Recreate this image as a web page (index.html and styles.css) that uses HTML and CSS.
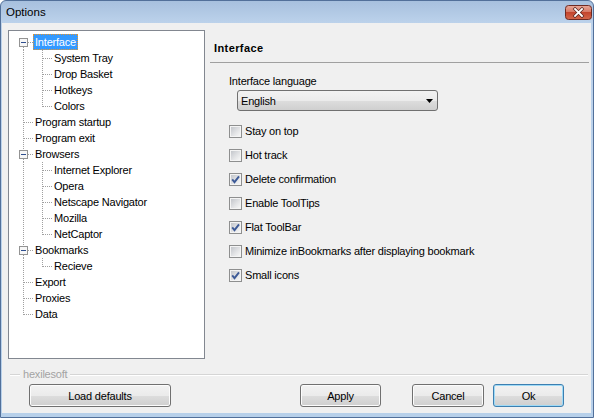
FILE: index.html
```html
<!DOCTYPE html>
<html>
<head>
<meta charset="utf-8">
<title>Options</title>
<link rel="stylesheet" href="styles.css">
</head>
<body>
<div class="window">
  <div class="titlebar">
    <span class="title">Options</span>
    <svg class="close" width="27" height="15" viewBox="0 0 27 15">
      <defs>
        <linearGradient id="cr" x1="0" y1="0" x2="0" y2="1">
          <stop offset="0" stop-color="#e9a99b"/>
          <stop offset="0.45" stop-color="#d77a66"/>
          <stop offset="0.5" stop-color="#c4452d"/>
          <stop offset="1" stop-color="#d5684c"/>
        </linearGradient>
      </defs>
      <rect x="0.5" y="0.5" width="26" height="14" rx="3" fill="url(#cr)" stroke="#6e2a22"/>
      <path d="M10 4 L17 11 M17 4 L10 11" stroke="#5a2620" stroke-width="3.2" stroke-linecap="square"/>
      <path d="M10 4 L17 11 M17 4 L10 11" stroke="#ffffff" stroke-width="1.8" stroke-linecap="square"/>
    </svg>
  </div>
  <div class="client">
    <div class="main">
      <div class="tree">
        <div class="node"><svg class="gut" width="24" height="16"><line class="dot" x1="14.5" y1="13" x2="14.5" y2="16"/><line class="dot" x1="19" y1="8.5" x2="24" y2="8.5"/><rect class="exp" x="10.5" y="4.5" width="8" height="8"/><line class="minus" x1="12" y1="8.5" x2="17" y2="8.5"/></svg><span class="lbl sel">Interface</span></div>
        <div class="node"><svg class="gut" width="43" height="16"><line class="dot" x1="14.5" y1="0" x2="14.5" y2="16"/><line class="dot" x1="33.5" y1="0" x2="33.5" y2="16"/><line class="dot" x1="34" y1="8.5" x2="43" y2="8.5"/></svg><span class="lbl">System Tray</span></div>
        <div class="node"><svg class="gut" width="43" height="16"><line class="dot" x1="14.5" y1="0" x2="14.5" y2="16"/><line class="dot" x1="33.5" y1="0" x2="33.5" y2="16"/><line class="dot" x1="34" y1="8.5" x2="43" y2="8.5"/></svg><span class="lbl">Drop Basket</span></div>
        <div class="node"><svg class="gut" width="43" height="16"><line class="dot" x1="14.5" y1="0" x2="14.5" y2="16"/><line class="dot" x1="33.5" y1="0" x2="33.5" y2="16"/><line class="dot" x1="34" y1="8.5" x2="43" y2="8.5"/></svg><span class="lbl">Hotkeys</span></div>
        <div class="node"><svg class="gut" width="43" height="16"><line class="dot" x1="14.5" y1="0" x2="14.5" y2="16"/><line class="dot" x1="33.5" y1="0" x2="33.5" y2="9"/><line class="dot" x1="34" y1="8.5" x2="43" y2="8.5"/></svg><span class="lbl">Colors</span></div>
        <div class="node"><svg class="gut" width="24" height="16"><line class="dot" x1="14.5" y1="0" x2="14.5" y2="16"/><line class="dot" x1="15" y1="8.5" x2="24" y2="8.5"/></svg><span class="lbl">Program startup</span></div>
        <div class="node"><svg class="gut" width="24" height="16"><line class="dot" x1="14.5" y1="0" x2="14.5" y2="16"/><line class="dot" x1="15" y1="8.5" x2="24" y2="8.5"/></svg><span class="lbl">Program exit</span></div>
        <div class="node"><svg class="gut" width="24" height="16"><line class="dot" x1="14.5" y1="0" x2="14.5" y2="4"/><line class="dot" x1="14.5" y1="13" x2="14.5" y2="16"/><line class="dot" x1="19" y1="8.5" x2="24" y2="8.5"/><rect class="exp" x="10.5" y="4.5" width="8" height="8"/><line class="minus" x1="12" y1="8.5" x2="17" y2="8.5"/></svg><span class="lbl">Browsers</span></div>
        <div class="node"><svg class="gut" width="43" height="16"><line class="dot" x1="14.5" y1="0" x2="14.5" y2="16"/><line class="dot" x1="33.5" y1="0" x2="33.5" y2="16"/><line class="dot" x1="34" y1="8.5" x2="43" y2="8.5"/></svg><span class="lbl">Internet Explorer</span></div>
        <div class="node"><svg class="gut" width="43" height="16"><line class="dot" x1="14.5" y1="0" x2="14.5" y2="16"/><line class="dot" x1="33.5" y1="0" x2="33.5" y2="16"/><line class="dot" x1="34" y1="8.5" x2="43" y2="8.5"/></svg><span class="lbl">Opera</span></div>
        <div class="node"><svg class="gut" width="43" height="16"><line class="dot" x1="14.5" y1="0" x2="14.5" y2="16"/><line class="dot" x1="33.5" y1="0" x2="33.5" y2="16"/><line class="dot" x1="34" y1="8.5" x2="43" y2="8.5"/></svg><span class="lbl">Netscape Navigator</span></div>
        <div class="node"><svg class="gut" width="43" height="16"><line class="dot" x1="14.5" y1="0" x2="14.5" y2="16"/><line class="dot" x1="33.5" y1="0" x2="33.5" y2="16"/><line class="dot" x1="34" y1="8.5" x2="43" y2="8.5"/></svg><span class="lbl">Mozilla</span></div>
        <div class="node"><svg class="gut" width="43" height="16"><line class="dot" x1="14.5" y1="0" x2="14.5" y2="16"/><line class="dot" x1="33.5" y1="0" x2="33.5" y2="9"/><line class="dot" x1="34" y1="8.5" x2="43" y2="8.5"/></svg><span class="lbl">NetCaptor</span></div>
        <div class="node"><svg class="gut" width="24" height="16"><line class="dot" x1="14.5" y1="0" x2="14.5" y2="4"/><line class="dot" x1="14.5" y1="13" x2="14.5" y2="16"/><line class="dot" x1="19" y1="8.5" x2="24" y2="8.5"/><rect class="exp" x="10.5" y="4.5" width="8" height="8"/><line class="minus" x1="12" y1="8.5" x2="17" y2="8.5"/></svg><span class="lbl">Bookmarks</span></div>
        <div class="node"><svg class="gut" width="43" height="16"><line class="dot" x1="14.5" y1="0" x2="14.5" y2="16"/><line class="dot" x1="33.5" y1="0" x2="33.5" y2="9"/><line class="dot" x1="34" y1="8.5" x2="43" y2="8.5"/></svg><span class="lbl">Recieve</span></div>
        <div class="node"><svg class="gut" width="24" height="16"><line class="dot" x1="14.5" y1="0" x2="14.5" y2="16"/><line class="dot" x1="15" y1="8.5" x2="24" y2="8.5"/></svg><span class="lbl">Export</span></div>
        <div class="node"><svg class="gut" width="24" height="16"><line class="dot" x1="14.5" y1="0" x2="14.5" y2="16"/><line class="dot" x1="15" y1="8.5" x2="24" y2="8.5"/></svg><span class="lbl">Proxies</span></div>
        <div class="node"><svg class="gut" width="24" height="16"><line class="dot" x1="14.5" y1="0" x2="14.5" y2="9"/><line class="dot" x1="15" y1="8.5" x2="24" y2="8.5"/></svg><span class="lbl">Data</span></div>
      </div>
      <div class="page">
        <div class="page-title">Interface</div>
        <div class="sep"></div>
        <div class="opts">
          <div class="lang-label">Interface language</div>
          <div class="combo"><span>English</span><svg width="7" height="4" viewBox="0 0 7 4"><path d="M0 0H7L3.5 4Z" fill="#000"/></svg></div>
          <div class="check-row first"><span class="box"><i></i></span><span>Stay on top</span></div>
          <div class="check-row"><span class="box"><i></i></span><span>Hot track</span></div>
          <div class="check-row"><span class="box"><i></i><svg class="tick" width="13" height="13" viewBox="0 0 13 13"><path d="M3.2 6.4 L5.5 9.2 L10 3.3" fill="none" stroke="#3d5a97" stroke-width="1.9"/></svg></span><span>Delete confirmation</span></div>
          <div class="check-row"><span class="box"><i></i></span><span>Enable ToolTips</span></div>
          <div class="check-row"><span class="box"><i></i><svg class="tick" width="13" height="13" viewBox="0 0 13 13"><path d="M3.2 6.4 L5.5 9.2 L10 3.3" fill="none" stroke="#3d5a97" stroke-width="1.9"/></svg></span><span>Flat ToolBar</span></div>
          <div class="check-row"><span class="box"><i></i></span><span>Minimize inBookmarks after displaying bookmark</span></div>
          <div class="check-row"><span class="box"><i></i><svg class="tick" width="13" height="13" viewBox="0 0 13 13"><path d="M3.2 6.4 L5.5 9.2 L10 3.3" fill="none" stroke="#3d5a97" stroke-width="1.9"/></svg></span><span>Small icons</span></div>
        </div>
      </div>
    </div>
    <div class="group">
      <span class="gline short"></span>
      <span class="gtext">hexilesoft</span>
      <span class="gline long"></span>
    </div>
    <div class="buttons">
      <button class="btn load">Load defaults</button>
      <button class="btn apply">Apply</button>
      <button class="btn cancel">Cancel</button>
      <button class="btn ok">Ok</button>
    </div>
  </div>
</div>
</body>
</html>
```

FILE: styles.css
```css
* { box-sizing: border-box; }

body {
  margin: 0;
  background: #ffffff;
  font-family: "Liberation Sans", Arial, sans-serif;
  font-size: 11px;
  letter-spacing: -0.2px;
  color: #000;
}

.window {
  width: 594px;
  height: 418px;
  border: 1px solid #52709a;
  border-radius: 6px 6px 0 0;
  background: linear-gradient(#a7c0de 0, #bcd2eb 22px, #b7d0ea 100%);
  display: flex;
  flex-direction: column;
}

.titlebar {
  height: 22px;
  flex: none;
  display: flex;
  align-items: flex-start;
  justify-content: space-between;
  padding: 0 1px 0 5px;
}

.title {
  font-size: 11.5px;
  letter-spacing: 0;
  line-height: 22px;
  color: #000;
}

.close {
  margin-top: 4px;
  display: block;
}

.client {
  height: 390px;
  flex: none;
  margin: 0 2px 4px 1px;
  background: #f0f0f0;
  padding: 7px 2px 0 6px;
  display: flex;
  flex-direction: column;
}

.main {
  display: flex;
  gap: 5px;
  height: 329px;
  flex: none;
}

.tree {
  width: 197px;
  flex: none;
  border: 1px solid #828790;
  background: #ffffff;
  padding-top: 3px;
}

.node {
  display: flex;
  height: 16px;
}

.gut {
  display: block;
  flex: none;
}

.dot {
  stroke: #a0a0a0;
  stroke-width: 1;
  stroke-dasharray: 1 1;
  shape-rendering: crispEdges;
}

.exp {
  fill: #f7f7f7;
  stroke: #939393;
  shape-rendering: crispEdges;
}

.minus {
  stroke: #2f4f8f;
  stroke-width: 1;
  shape-rendering: crispEdges;
}

.lbl {
  height: 16px;
  line-height: 16px;
  padding: 0 2px;
  white-space: nowrap;
}

.lbl.sel {
  background: #3399ff;
  color: #ffffff;
  outline: 1px dotted #e8942a;
  outline-offset: -1px;
}

.page {
  flex: 1;
}

.page-title {
  font-weight: bold;
  letter-spacing: 0.4px;
  line-height: 16px;
  margin: 10px 0 0 4px;
}

.sep {
  height: 1px;
  background: #a0a0a0;
  margin-top: 6px;
}

.opts {
  padding-left: 19px;
}

.lang-label {
  line-height: 16px;
  margin-top: 10px;
}

.combo {
  width: 201px;
  height: 21px;
  margin: 1px 0 0 8px;
  border: 1px solid #707070;
  border-radius: 3px;
  background: linear-gradient(#f2f2f2 0%, #ebebeb 50%, #dddddd 51%, #cfcfcf 100%);
  display: flex;
  align-items: center;
  justify-content: space-between;
  padding: 0 4px 0 3px;
}

.combo svg { display: block; }

.check-row {
  display: flex;
  align-items: center;
  gap: 3px;
  height: 13px;
  line-height: 13px;
  margin-top: 11px;
  white-space: nowrap;
}

.check-row.first {
  margin-top: 14px;
}

.box {
  position: relative;
  width: 13px;
  height: 13px;
  flex: none;
  border: 1px solid #8e8f8f;
  background: #f4f4f4;
  padding: 1px;
}

.box i {
  display: block;
  width: 9px;
  height: 9px;
  background: linear-gradient(135deg, #c3c6cb 0%, #e4e5e7 60%, #f6f6f6 100%);
}

.tick {
  position: absolute;
  left: -1px;
  top: -1px;
}

.group {
  display: flex;
  align-items: center;
  gap: 3px;
  height: 14px;
  margin: 8px 1px 0 2px;
  flex: none;
}

.gtext {
  color: #a3a3a3;
  line-height: 14px;
}

.gline {
  height: 2px;
  border-top: 1px solid #d5d5d5;
  border-bottom: 1px solid #ffffff;
  margin-top: 1px;
}

.gline.short { width: 10px; flex: none; }
.gline.long { flex: 1; }

.buttons {
  display: flex;
  margin-top: 3px;
  flex: none;
}

.btn {
  height: 23px;
  padding: 0;
  margin: 0;
  border: 1px solid #707070;
  border-radius: 3px;
  background: linear-gradient(#f2f2f2 0%, #ebebeb 50%, #dddddd 51%, #cfcfcf 100%);
  box-shadow: inset 0 0 0 1px #fcfcfc;
  font-family: "Liberation Sans", Arial, sans-serif;
  font-size: 11px;
  letter-spacing: -0.2px;
  color: #000;
  flex: none;
}

.btn.load { width: 142px; margin-left: 21px; }
.btn.apply { width: 81px; margin-left: 129px; }
.btn.cancel { width: 72px; margin-left: 31px; }
.btn.ok {
  width: 71px;
  margin-left: 9px;
  border-color: #3c7fb1;
  box-shadow: inset 0 0 0 1px #9fdaf6;
}
```
